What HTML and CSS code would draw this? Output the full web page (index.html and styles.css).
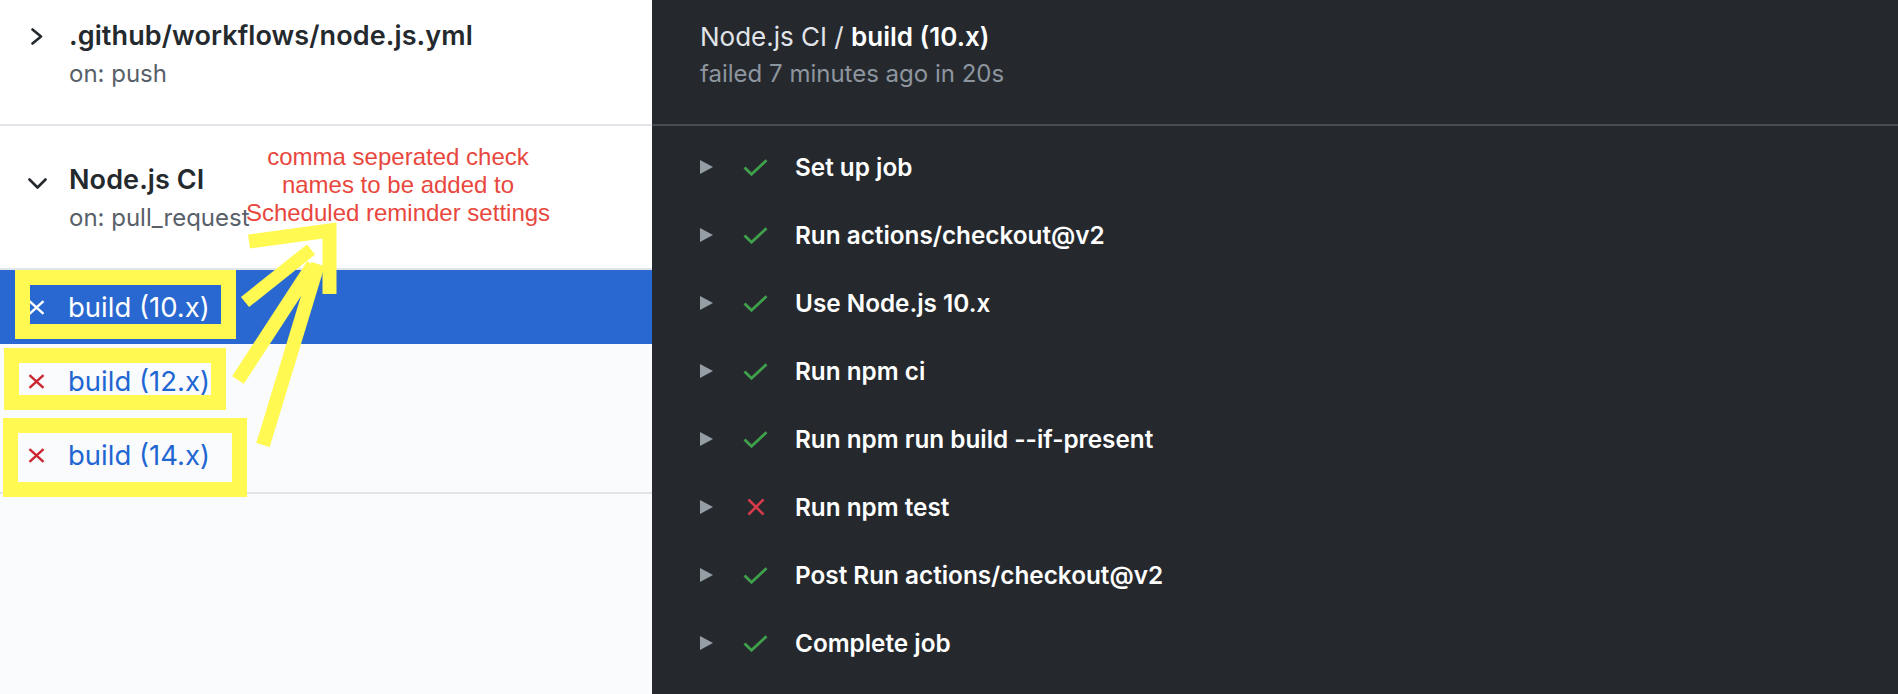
FILE: index.html
```html
<!DOCTYPE html>
<html lang="en">
<head>
<meta charset="utf-8">
<title>Node.js CI / build (10.x)</title>
<link rel="stylesheet" href="styles.css">
</head>
<body>
<div class="app">
  <aside class="sidebar">
    <div class="workflow first">
      <span class="chev"><svg width="12" height="17" viewBox="0 0 12 17"><path d="M1.5 1.5 L10 8.5 L1.5 15.5" fill="none" stroke="#24292e" stroke-width="2.6" stroke-linecap="round" stroke-linejoin="round"/></svg></span>
      <div class="wf-text">
        <div class="wf-title">.github/workflows/node.js.yml</div>
        <div class="wf-sub">on: push</div>
      </div>
    </div>
    <div class="workflow open">
      <span class="chev"><svg width="19" height="11" viewBox="0 0 19 11"><path d="M1.5 1.5 L9.5 9.5 L17.5 1.5" fill="none" stroke="#24292e" stroke-width="2.6" stroke-linecap="round" stroke-linejoin="round"/></svg></span>
      <div class="wf-text">
        <div class="wf-title">Node.js CI</div>
        <div class="wf-sub">on: pull_request</div>
      </div>
    </div>
    <ul class="jobs">
      <li class="job active">
        <span class="job-icon"><svg width="17" height="15" viewBox="0 0 17 15"><path d="M1.5 1.2 L15.5 13.8 M15.5 1.2 L1.5 13.8" stroke="#ffffff" stroke-width="2.4" fill="none"/></svg></span>
        <span class="job-name">build (10.x)</span>
      </li>
      <li class="job">
        <span class="job-icon"><svg width="17" height="15" viewBox="0 0 17 15"><path d="M1.5 1.2 L15.5 13.8 M15.5 1.2 L1.5 13.8" stroke="#cb2431" stroke-width="2.4" fill="none"/></svg></span>
        <span class="job-name">build (12.x)</span>
      </li>
      <li class="job">
        <span class="job-icon"><svg width="17" height="15" viewBox="0 0 17 15"><path d="M1.5 1.2 L15.5 13.8 M15.5 1.2 L1.5 13.8" stroke="#cb2431" stroke-width="2.4" fill="none"/></svg></span>
        <span class="job-name">build (14.x)</span>
      </li>
    </ul>

    <div class="note">comma seperated check<br>names to be added to<br>Scheduled reminder settings</div>
    <svg class="marks" width="652" height="520" viewBox="0 0 652 520">
      <g fill="none" stroke="#fff952" stroke-width="15">
        <rect x="22.5" y="277.5" width="206" height="54"/>
        <rect x="11.5" y="355.5" width="207" height="47"/>
        <rect x="10.5" y="425.5" width="229" height="64"/>
      </g>
      <g fill="none" stroke="#fff952" stroke-width="14">
        <polyline points="249,241.5 329.5,230.5 329.5,294" stroke-linejoin="miter"/>
        <line x1="245" y1="302" x2="311" y2="249.5" stroke-width="13"/>
        <line x1="238" y1="380" x2="313" y2="265"/>
        <line x1="263" y1="445" x2="318" y2="264"/>
      </g>
    </svg>
  </aside>

  <main class="log">
    <header class="log-head">
      <div class="log-title">Node.js CI / <strong>build (10.x)</strong></div>
      <div class="log-sub">failed 7 minutes ago in 20s</div>
    </header>
    <ul class="steps">
      <li class="step"><span class="caret"><svg width="13" height="14" viewBox="0 0 13 14"><polygon points="0,0 13,7 0,14"/></svg></span><span class="status ok"><svg width="25" height="17" viewBox="0 0 25 17"><path d="M1.5 8.5 L8.5 15.3 L23.5 1.3"/></svg></span><span class="step-name">Set up job</span></li>
      <li class="step"><span class="caret"><svg width="13" height="14" viewBox="0 0 13 14"><polygon points="0,0 13,7 0,14"/></svg></span><span class="status ok"><svg width="25" height="17" viewBox="0 0 25 17"><path d="M1.5 8.5 L8.5 15.3 L23.5 1.3"/></svg></span><span class="step-name">Run actions/checkout@v2</span></li>
      <li class="step"><span class="caret"><svg width="13" height="14" viewBox="0 0 13 14"><polygon points="0,0 13,7 0,14"/></svg></span><span class="status ok"><svg width="25" height="17" viewBox="0 0 25 17"><path d="M1.5 8.5 L8.5 15.3 L23.5 1.3"/></svg></span><span class="step-name">Use Node.js 10.x</span></li>
      <li class="step"><span class="caret"><svg width="13" height="14" viewBox="0 0 13 14"><polygon points="0,0 13,7 0,14"/></svg></span><span class="status ok"><svg width="25" height="17" viewBox="0 0 25 17"><path d="M1.5 8.5 L8.5 15.3 L23.5 1.3"/></svg></span><span class="step-name">Run npm ci</span></li>
      <li class="step"><span class="caret"><svg width="13" height="14" viewBox="0 0 13 14"><polygon points="0,0 13,7 0,14"/></svg></span><span class="status ok"><svg width="25" height="17" viewBox="0 0 25 17"><path d="M1.5 8.5 L8.5 15.3 L23.5 1.3"/></svg></span><span class="step-name">Run npm run build --if-present</span></li>
      <li class="step"><span class="caret"><svg width="13" height="14" viewBox="0 0 13 14"><polygon points="0,0 13,7 0,14"/></svg></span><span class="status fail"><svg width="18" height="18" viewBox="0 0 18 18"><path d="M1.5 1.5 L16.5 16.5 M16.5 1.5 L1.5 16.5"/></svg></span><span class="step-name">Run npm test</span></li>
      <li class="step"><span class="caret"><svg width="13" height="14" viewBox="0 0 13 14"><polygon points="0,0 13,7 0,14"/></svg></span><span class="status ok"><svg width="25" height="17" viewBox="0 0 25 17"><path d="M1.5 8.5 L8.5 15.3 L23.5 1.3"/></svg></span><span class="step-name">Post Run actions/checkout@v2</span></li>
      <li class="step"><span class="caret"><svg width="13" height="14" viewBox="0 0 13 14"><polygon points="0,0 13,7 0,14"/></svg></span><span class="status ok"><svg width="25" height="17" viewBox="0 0 25 17"><path d="M1.5 8.5 L8.5 15.3 L23.5 1.3"/></svg></span><span class="step-name">Complete job</span></li>
    </ul>
  </main>
</div>
</body>
</html>
```

FILE: styles.css
```css
* { box-sizing: border-box; }

html, body {
  margin: 0;
  padding: 0;
  height: 100%;
}

body {
  font-family: Inter, "Liberation Sans", Arial, sans-serif;
  overflow: hidden;
}

.app {
  display: flex;
  height: 694px;
}

/* ---------- sidebar ---------- */
.sidebar {
  position: relative;
  flex: 0 0 652px;
  width: 652px;
  background: #fafbfc;
}

.workflow {
  display: flex;
  align-items: flex-start;
  background: #ffffff;
  border-bottom: 2px solid #e1e4e8;
  padding: 36px 0 30px 24px;
}

.workflow.first {
  padding-top: 18px;
}

.chev {
  flex: 0 0 26px;
  height: 36px;
  margin-right: 19px;
  display: flex;
  align-items: center;
  justify-content: center;
}

.workflow.open .chev {
  padding-top: 6px;
}

.chev svg { display: block; }

.wf-title {
  font-size: 27px;
  line-height: 36px;
  font-weight: 600;
  color: #24292e;
  letter-spacing: 0.1px;
}

.wf-sub {
  font-size: 24px;
  line-height: 40px;
  color: #586069;
}

.jobs {
  list-style: none;
  margin: 0;
  padding: 0;
  border-bottom: 2px solid #e1e4e8;
}

.job {
  display: flex;
  align-items: center;
  height: 74px;
  padding-left: 28px;
  color: #1f66d2;
}

.job.active {
  background: #2968d0;
  color: #ffffff;
}

.job-icon {
  flex: 0 0 17px;
  display: flex;
  margin-right: 23px;
}

.job-icon svg { display: block; }

.job-name {
  font-size: 27.5px;
  line-height: 36px;
}

/* annotation overlay */
.note {
  position: absolute;
  left: 238px;
  top: 143px;
  width: 320px;
  text-align: center;
  white-space: nowrap;
  font-family: "Liberation Sans", Arial, sans-serif;
  font-size: 24px;
  line-height: 28px;
  color: #e8473d;
}

.marks {
  position: absolute;
  left: 0;
  top: 0;
  pointer-events: none;
}

/* ---------- log panel ---------- */
.log {
  flex: 1 1 auto;
  background: #25292e;
  color: #ffffff;
}

.log-head {
  padding: 19px 0 31px 48px;
  border-bottom: 2px solid #464c53;
}

.log-title {
  font-size: 26px;
  line-height: 36px;
  color: #e1e4e8;
}

.log-title strong {
  font-weight: 600;
  color: #ffffff;
}

.log-sub {
  font-size: 24px;
  line-height: 38px;
  color: #8d959e;
}

.steps {
  list-style: none;
  margin: 0;
  padding: 7px 0 0 0;
}

.step {
  display: flex;
  align-items: center;
  height: 68px;
  padding-left: 48px;
}

.caret {
  flex: 0 0 13px;
  display: flex;
  margin-right: 30px;
}

.caret svg { display: block; fill: #959da5; }

.status {
  flex: 0 0 25px;
  display: flex;
  justify-content: center;
  margin-right: 27px;
}

.status svg {
  display: block;
  fill: none;
  stroke-width: 2.8;
}

.status.ok svg { stroke: #3f9f4b; }
.status.fail svg { stroke: #d73a49; stroke-width: 2.6; }

.step-name {
  font-size: 24.3px;
  line-height: 34px;
  font-weight: 600;
  color: #ffffff;
}
```
